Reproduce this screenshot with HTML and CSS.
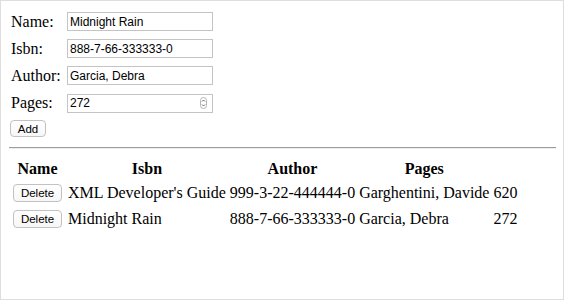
FILE: index.html
```html
<!DOCTYPE html>
<html lang="en">
<head>
    <meta charset="UTF-8">
    <meta name="viewport" content="width=device-width, initial-scale=1.0">
    <title>Books</title>
    <link rel="stylesheet" href="styles.css">
</head>
<body>
    <form class="book-form">
        <div class="fields">
            <label for="name">Name:</label>
            <input id="name" type="text" value="Midnight Rain">
            <label for="isbn">Isbn:</label>
            <input id="isbn" type="text" value="888-7-66-333333-0">
            <label for="author">Author:</label>
            <input id="author" type="text" value="Garcia, Debra">
            <label for="pages">Pages:</label>
            <div class="number-box">
                <input id="pages" type="number" value="272">
                <svg class="spin" width="7" height="12" viewBox="0 0 7 12">
                    <rect x="0.5" y="0.5" width="6" height="11" rx="3" fill="#fff" stroke="#b5b5b5"/>
                    <path d="M2 4.5 L3.5 3 L5 4.5" fill="none" stroke="#555" stroke-width="0.9"/>
                    <path d="M2 7.5 L3.5 9 L5 7.5" fill="none" stroke="#555" stroke-width="0.9"/>
                </svg>
            </div>
        </div>
        <button type="button" class="btn add">Add</button>
    </form>

    <hr class="divider">

    <table class="books">
        <thead>
            <tr>
                <th>Name</th>
                <th>Isbn</th>
                <th>Author</th>
                <th>Pages</th>
            </tr>
        </thead>
        <tbody>
            <tr>
                <td><button type="button" class="btn delete">Delete</button></td>
                <td>XML Developer's Guide</td>
                <td>999-3-22-444444-0</td>
                <td>Garghentini, Davide</td>
                <td>620</td>
            </tr>
            <tr>
                <td><button type="button" class="btn delete">Delete</button></td>
                <td>Midnight Rain</td>
                <td>888-7-66-333333-0</td>
                <td>Garcia, Debra</td>
                <td>272</td>
            </tr>
        </tbody>
    </table>
</body>
</html>
```

FILE: styles.css
```css
html {
    box-sizing: border-box;
    height: 300px;
    border: 1px solid #dedede;
    background: white;
}
body {
    margin: 7px;
    font-family: "Liberation Serif", "Times New Roman", serif;
    font-size: 16px;
    color: black;
}
.book-form {
    margin: 0;
}
.fields {
    display: grid;
    grid-template-columns: 56px 146px;
    grid-auto-rows: 19px;
    row-gap: 8px;
    align-items: center;
    padding: 4px 0 0 3px;
}
.fields label {
    line-height: 19px;
    white-space: nowrap;
}
.fields input {
    box-sizing: border-box;
    width: 146px;
    height: 19px;
    margin: 0;
    padding: 0 2px;
    border: 1px solid #c4c4c4;
    font-family: "Liberation Sans", Arial, sans-serif;
    font-size: 12px;
    color: black;
    background: white;
    outline: none;
}
.number-box {
    position: relative;
    width: 146px;
    height: 19px;
}
.number-box input {
    -moz-appearance: textfield;
}
.number-box input::-webkit-inner-spin-button,
.number-box input::-webkit-outer-spin-button {
    -webkit-appearance: none;
    margin: 0;
}
.spin {
    position: absolute;
    right: 6px;
    top: 4px;
}
.btn {
    box-sizing: border-box;
    margin: 2px;
    padding: 0 7px;
    border: 1px solid #c2c2c2;
    border-radius: 4px;
    background: linear-gradient(#ffffff, #f6f6f6);
    font-family: "Liberation Sans", Arial, sans-serif;
    font-size: 11.5px;
    color: black;
    cursor: pointer;
}
.add {
    height: 17px;
    margin-top: 8px;
    width: 36px;
    padding: 0;
}
.delete {
    height: 18px;
    width: 49px;
    padding: 0;
    display: block;
}
.divider {
    margin: 8px 0 8px 1px;
    height: 0;
    border: none;
    border-top: 1px solid #9d9d9d;
    border-bottom: 1px solid #ededed;
}
.books {
    border-spacing: 2px;
}
.books th {
    padding: 1px;
    font-weight: bold;
    text-align: center;
}
.books td {
    padding: 1px;
    text-align: left;
    white-space: nowrap;
}
```
